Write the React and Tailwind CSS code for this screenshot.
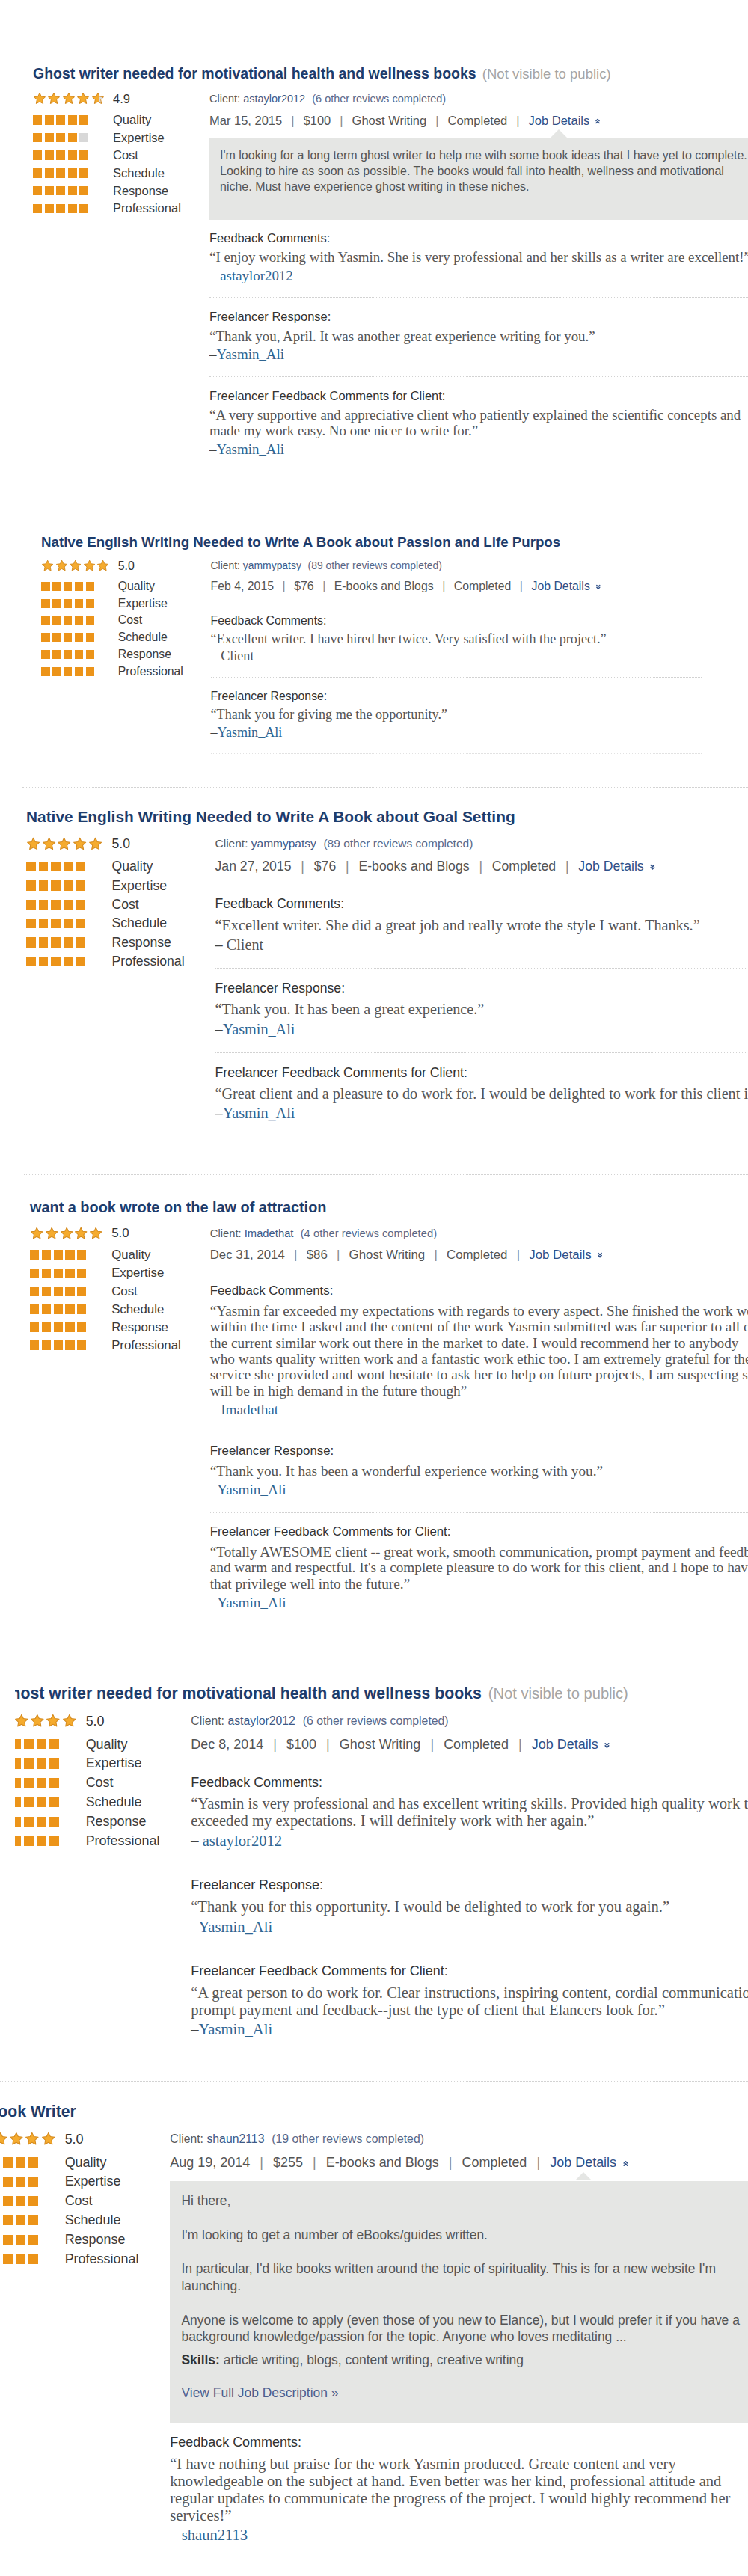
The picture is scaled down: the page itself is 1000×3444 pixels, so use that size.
import { ChevronsUp, ChevronsDown } from "lucide-react";

const STAR = "M10 1.4l2.55 5.3 5.8.75-4.25 4.05 1.05 5.75L10 14.5l-5.15 2.75 1.05-5.75L1.65 7.45l5.8-.75z";
const LABELS = ["Quality", "Expertise", "Cost", "Schedule", "Response", "Professional"];

const Star = ({ half }) => (
    <svg width="18" height="18" viewBox="0 0 20 20" className="shrink-0">
        {half && (
            <defs>
                <linearGradient id="halfStar" x1="0" x2="1" y1="0" y2="0">
                    <stop offset="0.6" stopColor="#f5ab2e" />
                    <stop offset="0.6" stopColor="#dcdcdc" />
                </linearGradient>
            </defs>
        )}
        <path d={STAR} fill={half ? "url(#halfStar)" : "#f5ab2e"} stroke="#d4891c" strokeWidth="1.1" strokeLinejoin="round" />
    </svg>
);

const Bars = ({ filled }) => (
    <div className="flex gap-[3.5px] w-[107px] shrink-0">
        {[0, 1, 2, 3, 4].map((i) => (
            <span key={i} className={i < filled ? "w-[12px] h-[12.5px] bg-[#ec9419]" : "w-[12px] h-[12.5px] bg-[#d8d8d8]"} />
        ))}
    </div>
);

const Pipe = () => <span className="mx-[12px] text-[#8a8a8a]">|</span>;

// grey "Job Details" panel for the first review
const DetailsShort = () => (
    <div className="mt-[11px] bg-[#e5e6e4] pt-[13.5px] pb-[33.5px] pl-[14px] text-[16px] leading-[21px] text-[#555] whitespace-nowrap">
        <div>I'm looking for a long term ghost writer to help me with some book ideas that I have yet to complete.</div>
        <div>Looking to hire as soon as possible. The books would fall into health, wellness and motivational</div>
        <div>niche. Must have experience ghost writing in these niches.</div>
    </div>
);

const DetailsLong = () => (
    <div className="mt-[11px] bg-[#e5e6e4] pt-[13.5px] pb-[27px] pl-[14px] text-[16px] leading-[20.5px] text-[#555] whitespace-nowrap">
        <p className="mb-[21.5px]">Hi there,</p>
        <p className="mb-[21.5px]">I'm looking to get a number of eBooks/guides written.</p>
        <p className="mb-[21.5px]">
            In particular, I'd like books written around the topic of spirituality. This is for a new website I'm
            <br />
            launching.
        </p>
        <p>
            Anyone is welcome to apply (even those of you new to Elance), but I would prefer it if you have a
            <br />
            background knowledge/passion for the topic. Anyone who loves meditating ...
        </p>
        <p className="mt-[8px]">
            <span className="font-bold text-[#333]">Skills:</span> article writing, blogs, content writing, creative writing
        </p>
        <p className="mt-[20px] text-[#4d5d8c]">View Full Job Description »</p>
    </div>
);

const Review = ({ r }) => (
    <div>
        <h2 className="h-[24px] leading-[24px] text-[19.5px] font-bold text-[#1d3c6c] whitespace-nowrap">
            {r.title}
            {r.hidden && <span className="ml-[3px] text-[18.5px] font-normal text-[#a5a5a5]"> (Not visible to public)</span>}
        </h2>
        <div className="mt-[10px] flex">
            {/* stars + rating bars */}
            <div className="w-[236px] shrink-0">
                <div className="flex items-center h-[24px]">
                    <div className="flex gap-[1.4px] w-[107px] shrink-0">
                        {[0, 1, 2, 3, 4].map((i) => (
                            <Star key={i} half={r.score === "4.9" && i === 4} />
                        ))}
                    </div>
                    <span className="text-[16.5px] text-[#333]">{r.score}</span>
                </div>
                <div className="mt-[4.5px]">
                    {LABELS.map((label, i) => (
                        <div key={label} className="flex items-center h-[23.7px]">
                            <Bars filled={r.bars ? r.bars[i] : 5} />
                            <span className="text-[16.5px] text-[#3b3b3b]">{label}</span>
                        </div>
                    ))}
                </div>
            </div>

            {/* job info + feedback */}
            <div className={r.narrow ? "w-[684px] shrink-0" : "w-[760px] shrink-0"}>
                <div className="h-[24px] leading-[24px] text-[14.5px] text-[#5a5a5a] whitespace-nowrap">
                    Client: <span className="text-[#3d5a88]">{r.client}</span>
                    <span className="ml-[5px] text-[#5a6888]"> ({r.others} other reviews completed)</span>
                </div>
                <div className="mt-[4.5px] h-[24px] leading-[24px] text-[16.5px] text-[#555] whitespace-nowrap">
                    {r.date}
                    <Pipe />
                    {r.amount}
                    <Pipe />
                    {r.category}
                    <Pipe />
                    Completed
                    <Pipe />
                    <span className="relative inline-block text-[#2f5088]">
                        Job Details
                        {r.details && (
                            <span className="absolute left-1/2 -translate-x-1/2 top-full w-0 h-0 border-x-[11px] border-x-transparent border-b-[11px] border-b-[#e5e6e4]" />
                        )}
                    </span>
                    {r.details ? (
                        <ChevronsUp size={10} strokeWidth={3.5} className="inline-block ml-[6px] align-middle text-[#2f5088]" />
                    ) : (
                        <ChevronsDown size={10} strokeWidth={3.5} className="inline-block ml-[6px] align-middle text-[#2f5088]" />
                    )}
                </div>

                {r.details === "short" && <DetailsShort />}
                {r.details === "long" && <DetailsLong />}

                <div className={r.details ? "mt-[14px]" : "mt-[25px]"}>
                    {r.blocks.map((b, i) => (
                        <div key={i}>
                            {i > 0 && <div className="mt-[17.5px] mb-[15px] border-t border-dotted border-[#d2d2d2]" />}
                            <div className="h-[20px] leading-[20px] text-[16.5px] text-[#333]">{b.label}</div>
                            <div className="mt-[5.5px] font-['Liberation_Serif','Times_New_Roman',serif] text-[18.9px] leading-[21px] text-[#555] whitespace-nowrap">
                                {b.lines.map((l) => (
                                    <div key={l}>{l}</div>
                                ))}
                            </div>
                            <div className="mt-[3.5px] h-[22px] leading-[22px] font-['Liberation_Serif','Times_New_Roman',serif] text-[18.9px] text-[#444]">
                                {b.dash}
                                <span className={b.plain ? "text-[#555]" : "text-[#2f6592]"}>{b.name}</span>
                            </div>
                        </div>
                    ))}
                    {r.trailing && <div className="mt-[17.5px] border-t border-dotted border-[#e2e2e2]" />}
                </div>
            </div>
        </div>
    </div>
);

const FC = "Feedback Comments:";
const FR = "Freelancer Response:";
const FFC = "Freelancer Feedback Comments for Client:";
const yasmin = { dash: "–", name: "Yasmin_Ali" };

const reviews = [
    {
        title: "Ghost writer needed for motivational health and wellness books",
        hidden: true,
        score: "4.9",
        bars: [5, 4, 5, 5, 5, 5],
        client: "astaylor2012",
        others: 6,
        date: "Mar 15, 2015",
        amount: "$100",
        category: "Ghost Writing",
        details: "short",
        blocks: [
            { label: FC, lines: ["“I enjoy working with Yasmin. She is very professional and her skills as a writer are excellent!”"], dash: "– ", name: "astaylor2012" },
            { label: FR, lines: ["“Thank you, April. It was another great experience writing for you.”"], ...yasmin },
            {
                label: FFC,
                lines: [
                    "“A very supportive and appreciative client who patiently explained the scientific concepts and",
                    "made my work easy. No one nicer to write for.”",
                ],
                ...yasmin,
            },
        ],
    },
    {
        title: "Native English Writing Needed to Write A Book about Passion and Life Purpos",
        score: "5.0",
        client: "yammypatsy",
        others: 89,
        date: "Feb 4, 2015",
        amount: "$76",
        category: "E-books and Blogs",
        narrow: true,
        trailing: true,
        blocks: [
            { label: FC, lines: ["“Excellent writer. I have hired her twice. Very satisfied with the project.”"], dash: "– ", name: "Client", plain: true },
            { label: FR, lines: ["“Thank you for giving me the opportunity.”"], ...yasmin },
        ],
    },
    {
        title: "Native English Writing Needed to Write A Book about Goal Setting",
        score: "5.0",
        client: "yammypatsy",
        others: 89,
        date: "Jan 27, 2015",
        amount: "$76",
        category: "E-books and Blogs",
        blocks: [
            { label: FC, lines: ["“Excellent writer. She did a great job and really wrote the style I want. Thanks.”"], dash: "– ", name: "Client", plain: true },
            { label: FR, lines: ["“Thank you. It has been a great experience.”"], ...yasmin },
            { label: FFC, lines: ["“Great client and a pleasure to do work for. I would be delighted to work for this client in the future.”"], ...yasmin },
        ],
    },
    {
        title: "want a book wrote on the law of attraction",
        score: "5.0",
        client: "Imadethat",
        others: 4,
        date: "Dec 31, 2014",
        amount: "$86",
        category: "Ghost Writing",
        blocks: [
            {
                label: FC,
                lines: [
                    "“Yasmin far exceeded my expectations with regards to every aspect. She finished the work well",
                    "within the time I asked and the content of the work Yasmin submitted was far superior to all of",
                    "the current similar work out there in the market to date. I would recommend her to anybody",
                    "who wants quality written work and a fantastic work ethic too. I am extremely grateful for the",
                    "service she provided and wont hesitate to ask her to help on future projects, I am suspecting she",
                    "will be in high demand in the future though”",
                ],
                dash: "– ",
                name: "Imadethat",
            },
            { label: FR, lines: ["“Thank you. It has been a wonderful experience working with you.”"], ...yasmin },
            {
                label: FFC,
                lines: [
                    "“Totally AWESOME client -- great work, smooth communication, prompt payment and feedback,",
                    "and warm and respectful. It's a complete pleasure to do work for this client, and I hope to have",
                    "that privilege well into the future.”",
                ],
                ...yasmin,
            },
        ],
    },
    {
        title: "Ghost writer needed for motivational health and wellness books",
        hidden: true,
        score: "5.0",
        client: "astaylor2012",
        others: 6,
        date: "Dec 8, 2014",
        amount: "$100",
        category: "Ghost Writing",
        blocks: [
            {
                label: FC,
                lines: [
                    "“Yasmin is very professional and has excellent writing skills. Provided high quality work that",
                    "exceeded my expectations. I will definitely work with her again.”",
                ],
                dash: "– ",
                name: "astaylor2012",
            },
            { label: FR, lines: ["“Thank you for this opportunity. I would be delighted to work for you again.”"], ...yasmin },
            {
                label: FFC,
                lines: [
                    "“A great person to do work for. Clear instructions, inspiring content, cordial communication,",
                    "prompt payment and feedback--just the type of client that Elancers look for.”",
                ],
                ...yasmin,
            },
        ],
    },
    {
        title: "eBook Writer",
        score: "5.0",
        client: "shaun2113",
        others: 19,
        date: "Aug 19, 2014",
        amount: "$255",
        category: "E-books and Blogs",
        details: "long",
        blocks: [
            {
                label: FC,
                lines: [
                    "“I have nothing but praise for the work Yasmin produced. Greate content and very",
                    "knowledgeable on the subject at hand. Even better was her kind, professional attitude and",
                    "regular updates to communicate the progress of the project. I would highly recommend her",
                    "services!”",
                ],
                dash: "– ",
                name: "shaun2113",
            },
        ],
    },
];

const Separator = ({ className }) => <div className={"mt-auto border-t border-dotted border-[#d3d3d3] " + className} />;

export default function App() {
    return (
        <div className="w-[1000px] h-[3444px] overflow-hidden bg-white font-['Liberation_Sans',Arial,sans-serif] flex flex-col">
            <div className="h-[689px] shrink-0 flex flex-col overflow-hidden">
                <div className="pt-[86px] pl-[44px]">
                    <Review r={reviews[0]} />
                </div>
                <Separator className="ml-[50px] w-[891px]" />
            </div>

            <div className="h-[364px] shrink-0 flex flex-col overflow-hidden">
                <div className="pt-[23.5px] pl-[55px]">
                    <div className="[zoom:0.96]">
                        <Review r={reviews[1]} />
                    </div>
                </div>
                <Separator className="ml-[30px]" />
            </div>

            <div className="h-[518px] shrink-0 flex flex-col overflow-hidden">
                <div className="pt-[26px] pl-[35px]">
                    <div className="[zoom:1.07]">
                        <Review r={reviews[2]} />
                    </div>
                </div>
                <Separator className="ml-[32px]" />
            </div>

            <div className="h-[653px] shrink-0 flex flex-col overflow-hidden">
                <div className="pt-[31px] pl-[40px]">
                    <div className="[zoom:1.02]">
                        <Review r={reviews[3]} />
                    </div>
                </div>
                <Separator className="ml-[19px]" />
            </div>

            <div className="h-[559px] shrink-0 flex flex-col overflow-hidden">
                <div className="pt-[27px] ml-[20px] overflow-hidden">
                    <div className="ml-[-22px]">
                        <div className="[zoom:1.09]">
                            <Review r={reviews[4]} />
                        </div>
                    </div>
                </div>
                <Separator className="" />
            </div>

            <div className="flex-1 overflow-hidden">
                <div className="pt-[27px] ml-[-30px]">
                    <div className="[zoom:1.09]">
                        <Review r={reviews[5]} />
                    </div>
                </div>
            </div>
        </div>
    );
}
